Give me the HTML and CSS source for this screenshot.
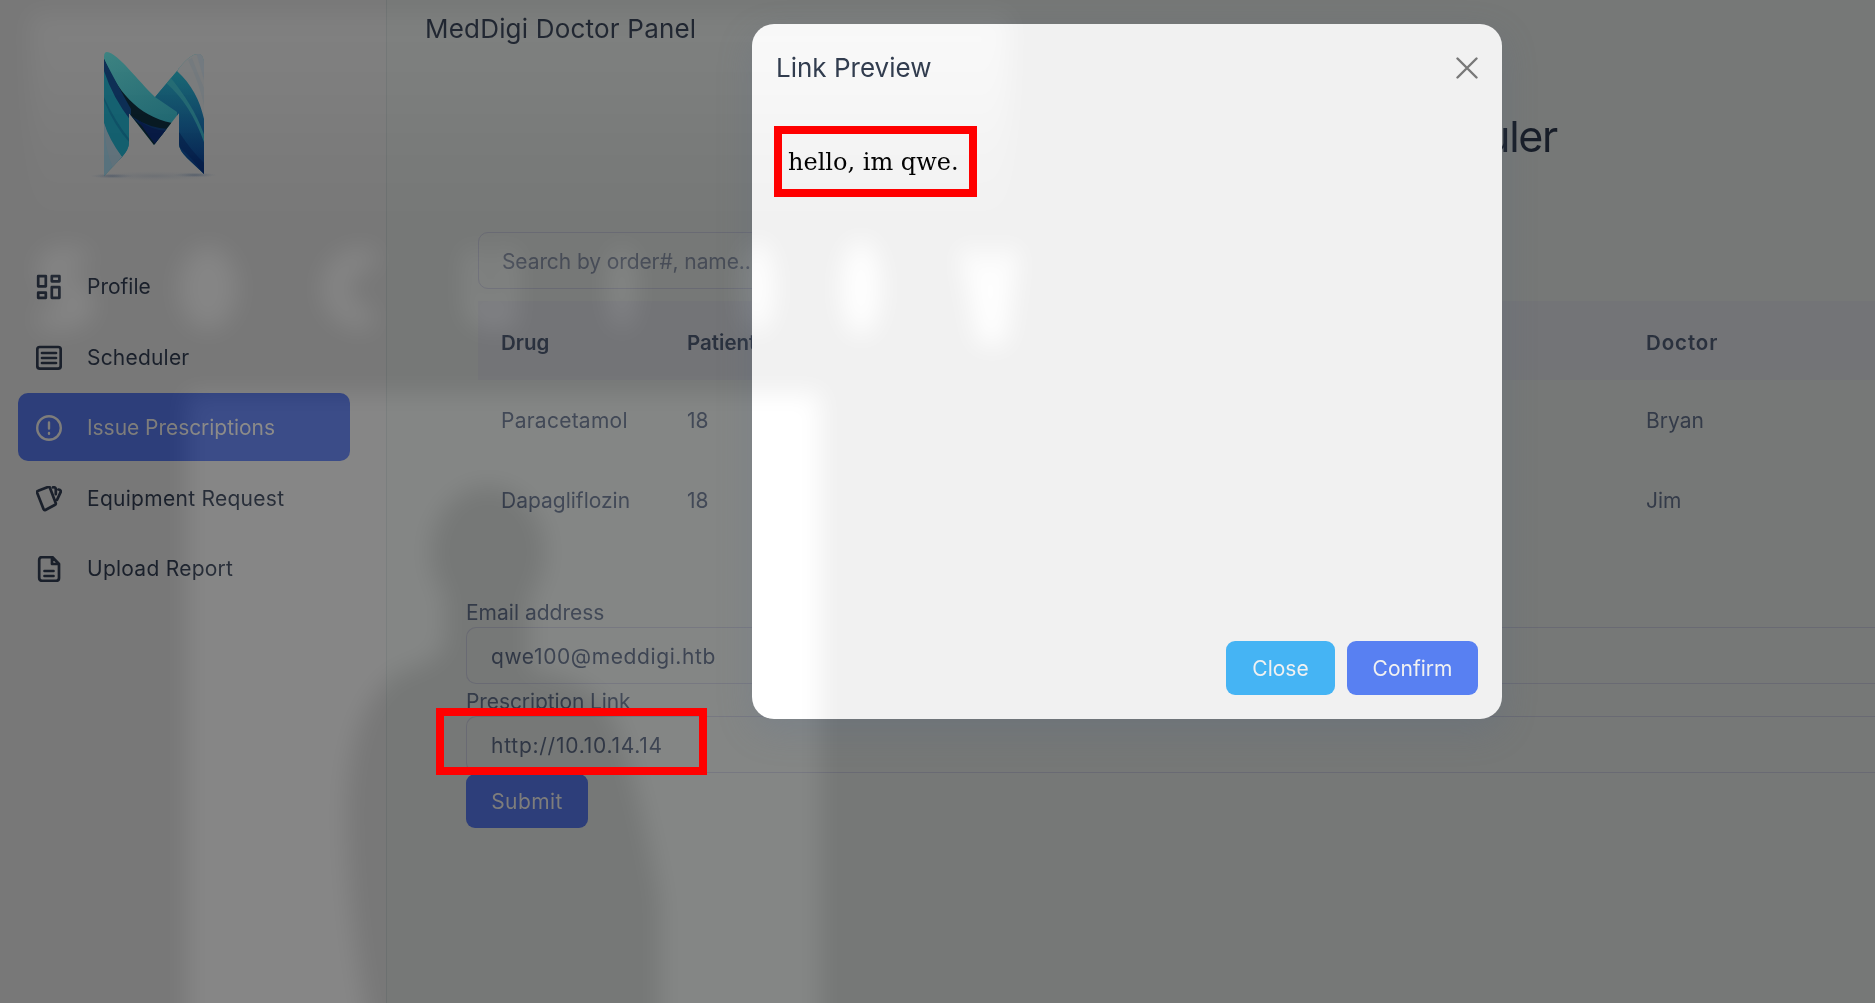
FILE: index.html
```html
<!DOCTYPE html>
<html lang="en">
<head>
<meta charset="utf-8">
<title>MedDigi Doctor Panel</title>
<link rel="stylesheet" href="styles.css">
</head>
<body>
<div class="app">
  <aside class="sidebar">
    <svg class="logo" viewBox="0 0 150 150" aria-label="MedDigi">
      <defs>
        <clipPath id="m"><path d="M24 17Q24 12 27 12C38 13 58 41 75 57L97 31Q110 13 119 14Q124 15 124 25V134L107 118Q99 110 99 104V73L74 105L49 73V103Q49 109 42 117L24 136Z"/></clipPath>
        <linearGradient id="tl" x1="0" y1="0" x2="0.4" y2="1"><stop offset="0" stop-color="#377d7b"/><stop offset="1" stop-color="#125968"/></linearGradient>
        <linearGradient id="bl" x1="0" y1="0" x2="0" y2="1"><stop offset="0" stop-color="#14666f"/><stop offset="0.5" stop-color="#0b3f62"/><stop offset="1" stop-color="#021748"/></linearGradient>
        <radialGradient id="sh"><stop offset="0" stop-color="#34445a" stop-opacity=".55"/><stop offset="1" stop-color="#5a6470" stop-opacity="0"/></radialGradient>
      </defs>
      <ellipse cx="32" cy="136" rx="22" ry="2.500" fill="url(#sh)"/>
      <ellipse cx="115" cy="135" rx="22" ry="2.500" fill="url(#sh)"/>
      <ellipse cx="74" cy="136" rx="60" ry="5" fill="url(#sh)" opacity=".35"/>
      <g clip-path="url(#m)">
        <rect x="20" y="10" width="110" height="130" fill="url(#tl)"/>
        <path d="M97 25C114 44 121 62 126 85V140H97V72L75 57Z" fill="url(#bl)"/>
        <path d="M97 31C113 46 121 62 125 84V10H100Z" fill="#747677"/>
        <path d="M116 12L124 40V10Z" fill="#6c7379"/>
        <path d="M108 20Q119 42 124 65V48Q118 34 112 18Z" fill="#6d7377"/>
        <path d="M85 42C104 58 116 79 125 105V97C117 74 105 55 90 37Z" fill="#23696f" opacity=".8"/>
        <path d="M99 107Q115 120 125 136V124Q112 112 99 92Z" fill="#02153f" opacity=".5"/>
        <path d="M22 14C34 46 55 76 92 83L73 108L48 73Q31 47 22 39Z" fill="#04161f"/>
        <path d="M53 77Q69 88 89 89L83 96Q65 91 51 76Z" fill="#052046"/>
        <path d="M58 80Q73 91 87 91L76 105Q69 97 58 80Z" fill="#041640"/>
        <path d="M23 25Q34 48 50 70V120H23Z" fill="#105c6b"/>
        <path d="M23 17Q38 46 51 69V81Q32 57 23 28Z" fill="#08294f"/>
        <path d="M23 58Q34 86 50 103V100Q34 80 23 55Z" fill="#0b4d62"/>
        <path d="M24 83Q28 101 42 117L24 137Z" fill="#56707b"/>
        <path d="M24 83Q25 110 33 128L42 117Q29 99 24 83Z" fill="#5e6f78"/>
      </g>
    </svg>
    <nav class="nav">
      <a class="nav-item"><svg class="icon" viewBox="0 0 26 26"><path d="M2.200 2.200h7.600v10.100H2.200zM15.800 2.200h7.600v5.100h-7.600zM2.200 18.700h7.600v5.100H2.200zM15.800 13.200h7.600v10.600h-7.600z"/></svg><span class="t-profile">Profile</span></a>
      <a class="nav-item"><svg class="icon" viewBox="0 0 26 26"><rect x="1.300" y="2" width="23.400" height="21.600" rx="2.500"/><path d="M6 8h14M6 13h14M6 18h14"/></svg><span class="t-scheduler">Scheduler</span></a>
      <a class="nav-item active"><svg class="icon thin" viewBox="0 0 26 26"><circle cx="13" cy="13" r="11.800"/><path d="M13 7.500v6M13 18v.800"/></svg><span class="t-issue">Issue Prescriptions</span></a>
      <a class="nav-item"><svg class="icon" viewBox="0 0 26 26"><path d="M2.200 4.800L12 1q1.400-.5 2 .9l5.700 15q.5 1.500-1 2.100l-9.300 5q-1.200.5-1.800-.8L1.100 6.700q-.4-1.400 1.100-1.900zM17 1.300q3-.3 2.800 2.300v4.600M22.500 3.500q3 .5 2 2.900l-3.400 7.400"/></svg><span class="t-equip">Equipment Request</span></a>
      <a class="nav-item"><svg class="icon" viewBox="0 0 26 26"><path d="M6 1.200h10.500L23 8v14q0 2.800-2.800 2.800H6Q3.200 24.800 3.200 22V4Q3.200 1.200 6 1.200zM16 1.500V8h6.500M8.500 15h9M8.500 20h9"/></svg><span class="t-upload">Upload Report</span></a>
    </nav>
  </aside>
  <main class="main">
    <header class="topbar"><span class="t-brand">MedDigi Doctor Panel</span></header>
    <h1 class="heading">Scheduler</h1>
    <section class="orders">
      <div class="search"><span class="t-search">Search by order#, name...</span></div>
      <div class="row head"><span>Drug</span><span>Patient</span><span class="t-doctor">Doctor</span></div>
      <div class="row"><span class="t-drug">Paracetamol</span><span>18</span><span>Bryan</span></div>
      <div class="row"><span>Dapagliflozin</span><span>18</span><span>Jim</span></div>
    </section>
    <form class="form">
      <label class="label"><span class="t-email">Email address</span></label>
      <div class="field"><span class="t-mail">qwe100@meddigi.htb</span></div>
      <label class="label"><span class="t-link">Prescription Link</span></label>
      <div class="field"><span class="t-url">http://10.10.14.14</span></div>
      <button class="btn submit" type="button">Submit</button>
    </form>
  </main>
</div>

<div class="modal" role="dialog">
  <div class="modal-head">
    <span class="t-modal">Link Preview</span>
    <svg class="x" viewBox="0 0 22 22"><path d="M1.500 1.500l19 19M20.500 1.500l-19 19"/></svg>
  </div>
  <div class="modal-body">hello, im qwe.</div>
  <div class="modal-foot">
    <button class="btn close" type="button">Close</button>
    <button class="btn confirm" type="button">Confirm</button>
  </div>
</div>

<svg class="haze" viewBox="0 0 1875 1003">
  <defs>
    <filter id="b" filterUnits="userSpaceOnUse" x="-60" y="-60" width="2000" height="1220" color-interpolation-filters="sRGB"><feGaussianBlur stdDeviation="12"/></filter>
    <linearGradient id="top" x1="0" y1="0" x2="0" y2="1"><stop offset="0" stop-color="#fff"/><stop offset=".3" stop-color="#fff" stop-opacity=".75"/><stop offset=".6" stop-color="#fff" stop-opacity=".35"/><stop offset="1" stop-color="#fff" stop-opacity="0"/></linearGradient>
    <mask id="person" maskUnits="userSpaceOnUse" x="0" y="0" width="1875" height="1100">
      <rect width="1875" height="1100" fill="#fff"/>
      <g fill="#000" filter="url(#b)">
        <ellipse cx="488" cy="552" rx="57" ry="66"/>
        <path d="M445 600H530V670Q600 680 618 730Q642 800 660 900V1100H385Q345 930 347 800Q352 700 400 672Q445 660 445 640Z"/>
      </g>
    </mask>
  </defs>
  <path d="M30 14H1010V240H30Z" fill="url(#top)" filter="url(#b)" opacity=".03"/>
  <g mask="url(#person)" opacity=".053"><rect x="187" y="393" width="633" height="700" fill="#fff" filter="url(#b)"/></g>
  <g fill="#fff" filter="url(#b)" opacity=".052">
    <path d="M88 250Q42 240 38 266Q38 290 66 296Q64 310 38 310V328Q92 336 94 306Q92 282 64 276Q64 264 88 266Z"/>
    <ellipse cx="208" cy="288" rx="29" ry="42"/>
    <path d="M375 248Q325 245 322 288Q325 330 372 330V308Q347 305 349 288Q350 270 375 267Z"/>
    <path d="M465 250V310Q468 335 516 327V250H497V305H484V250Z"/>
    <ellipse cx="622" cy="288" rx="14" ry="42"/><ellipse cx="757" cy="287" rx="17" ry="46"/>
    <ellipse cx="861" cy="288" rx="20" ry="48"/>
    <path d="M960 250L978 345H1006L1018 250H994L990 280L984 250Z"/>
  </g>
</svg>
<div class="mark mark-preview"></div>
<div class="mark mark-url"></div>
</body>
</html>
```
FILE: styles.css
```css
* { box-sizing: border-box; }
body {
  margin: 0;
  width: 1875px;
  height: 1003px;
  overflow: hidden;
  position: relative;
  background: #767877;
  font-family: Inter, "Liberation Sans", sans-serif;
  font-size: 21px;
  color: #343b49;
}
.app { display: flex; height: 1003px; }

.sidebar {
  width: 387px;
  flex: none;
  background: #787878;
  border-right: 1px solid #6c7070;
  padding: 40px 36px 0 18px;
}
.logo { display: block; width: 150px; height: 150px; margin-left: 62px; }
.nav { display: flex; flex-direction: column; gap: 2.5px; margin-top: 62px; }
.nav-item {
  display: flex;
  align-items: center;
  gap: 25px;
  height: 68px;
  padding: 2px 18px 0;
  border-radius: 10px;
  color: #1a202b;
  white-space: nowrap;
}
.nav-item span { margin-top: -1px; }
.icon { width: 26px; height: 26px; fill: none; stroke: currentColor; stroke-width: 2.7; stroke-linecap: round; stroke-linejoin: round; }
.thin { stroke-width: 2.4; }
.active { background: #2d3e7a; color: #7e7d7b; }
.t-scheduler { letter-spacing: .2px; }
.t-issue { letter-spacing: -.05px; }
.t-equip { letter-spacing: .28px; }
.t-upload { letter-spacing: .25px; }

.main { flex: 1; min-width: 0; }
.topbar { height: 58px; line-height: 57px; padding-left: 38px; font-size: 26px; color: #1a202b; }
.t-brand { letter-spacing: .2px; }
.heading {
  margin: 0;
  width: 1170px;
  height: 174px;
  padding-top: 51px;
  line-height: 54px;
  text-align: right;
  font-size: 43px;
  font-weight: 400;
  letter-spacing: -1.3px;
  color: #171d28;
}
.orders { margin-left: 91px; }
.search, .field {
  height: 57px;
  border: 1px solid #696a73;
  border-radius: 10px;
  line-height: 57px;
  padding-left: 24px;
}
.search { width: 420px; padding-left: 23px; color: #474c57; margin-bottom: 12px; letter-spacing: -.1px; }
.row {
  display: grid;
  grid-template-columns: 186px 959px 1fr;
  height: 80px;
  line-height: 82px;
  padding-left: 23px;
}
.t-drug { letter-spacing: .25px; }
.head { background: #737477; color: #2a313e; font-weight: 600; height: 79px; line-height: 83px; font-size: 20.5px; }
.t-doctor { letter-spacing: .9px; }
.form { margin: 60px 0 0 79px; }
.label { display: block; height: 27px; line-height: 25px; }
.field {
  color: #303745;
  border-right: 0;
  border-radius: 10px 0 0 10px;
  margin-bottom: 5px;
}
.t-mail { letter-spacing: .6px; }
.t-url { letter-spacing: .75px; }
.t-link { letter-spacing: -.1px; }
.btn {
  height: 54px;
  border: 0;
  border-radius: 9px;
  padding: 0;
  font: inherit;
  color: #f1f1f1;
}
.submit { display: block; width: 122px; margin-top: -4px; background: #2d3e7a; color: #7e7d7b; letter-spacing: .4px; }

.modal {
  position: absolute;
  left: 752px;
  top: 24px;
  width: 750px;
  height: 695px;
  border-radius: 22px;
  background: #f1f1f1;
  box-shadow: 0 12px 34px rgba(90, 105, 130, .3);
  padding: 24px;
  display: flex;
  flex-direction: column;
}
.modal-head { display: flex; align-items: center; justify-content: space-between; height: 39px; font-size: 26px; color: #2b3648; }
.x { width: 22px; height: 22px; fill: none; stroke: #787878; stroke-width: 2.4; stroke-linecap: round; }
.modal-body { flex: 1; padding: 61px 0 0 12px; font: 24px/28px "DejaVu Serif", serif; color: #000; }
.modal-foot { display: flex; justify-content: flex-end; gap: 12px; }
.close { width: 109px; background: #45b4f4; }
.confirm { width: 131px; background: #5880f2; }

.haze { position: absolute; left: 0; top: 0; width: 1875px; height: 1003px; mix-blend-mode: plus-lighter; }
.mark { position: absolute; border: 8px solid #f00; }
.mark-preview { left: 774px; top: 126px; width: 203px; height: 71px; }
.mark-url { left: 436px; top: 708px; width: 271px; height: 67px; }
```
